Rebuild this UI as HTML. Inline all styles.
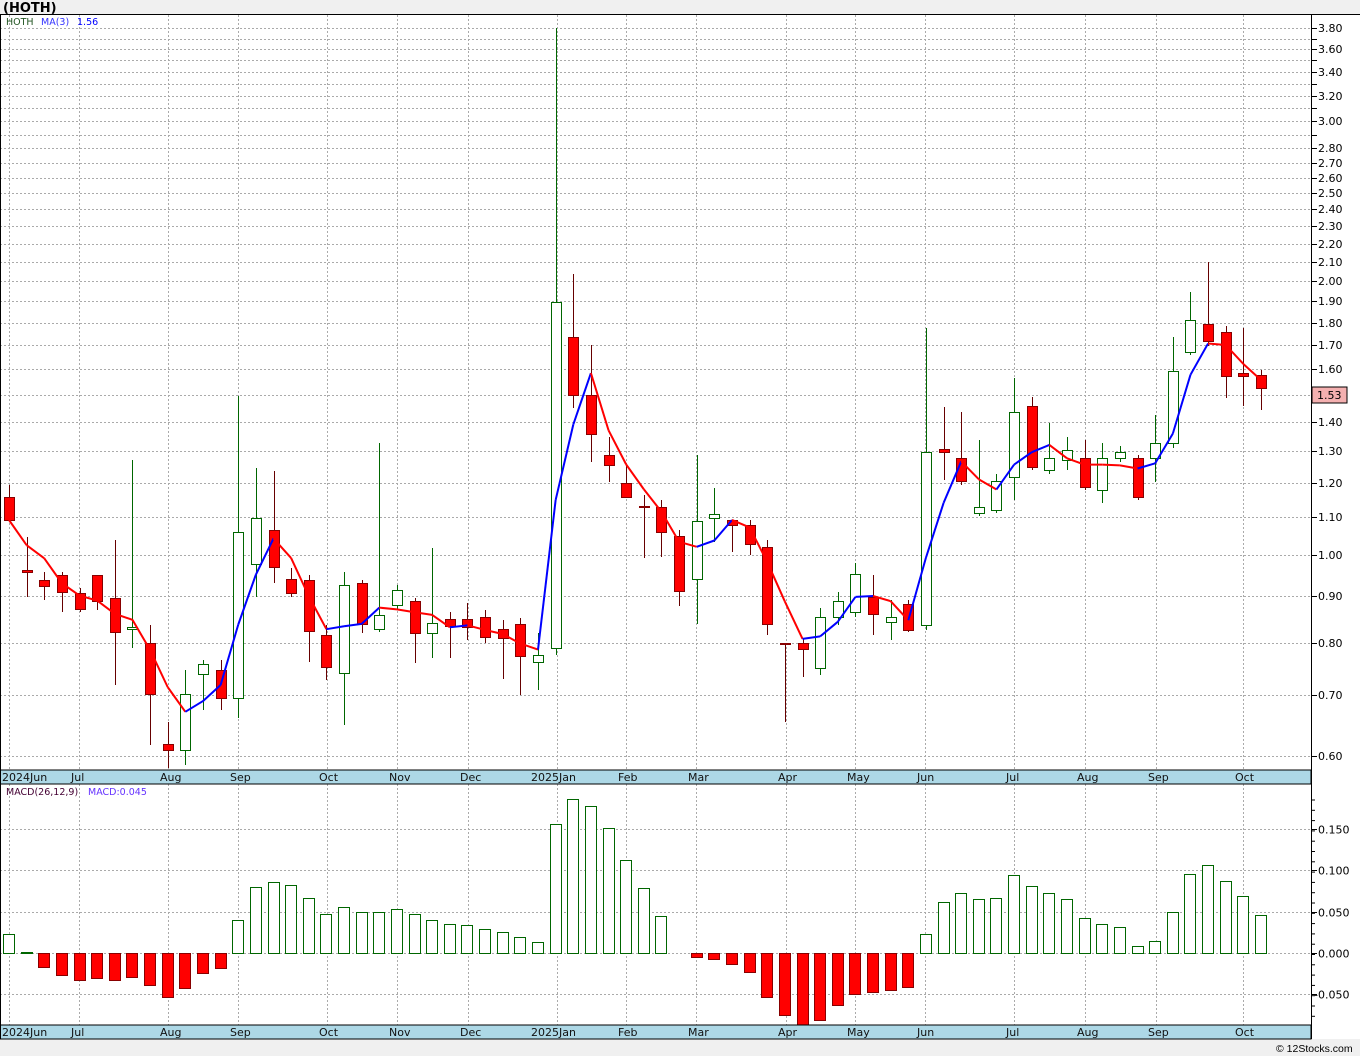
<!DOCTYPE html>
<html><head><meta charset="utf-8"><style>
html,body{margin:0;padding:0;background:#fff;}
svg{display:block;font-family:"DejaVu Sans","Liberation Sans",sans-serif;}
</style></head><body>
<svg id="s" width="1360" height="1056" xmlns="http://www.w3.org/2000/svg">
<rect x="0" y="1039" width="1360" height="17" fill="#f0f0f0"/>
<rect x="0" y="0" width="1360" height="14" fill="#f0f0f0"/>
<g id="grid"></g>
<g id="cand"></g>
<g id="macd"></g>
<rect x="0" y="770" width="1311" height="14" fill="#add8e6" stroke="#000" stroke-width="1"/>
<rect x="0" y="1025" width="1311" height="14" fill="#add8e6" stroke="#000" stroke-width="1"/>
<line x1="0" y1="14.5" x2="1360" y2="14.5" stroke="#000"/>
<line x1="1311.5" y1="14" x2="1311.5" y2="1039" stroke="#000"/>
<line x1="0.5" y1="14" x2="0.5" y2="1039" stroke="#000"/>
<g font-size="11" fill="#000">
<text x="3" y="12" font-weight="bold" font-size="13">(HOTH)</text>
<text x="6" y="25" font-size="9.5" fill="#225522">HOTH</text>
<text x="41" y="25" font-size="9.5" fill="#3333ff">MA(3)</text>
<text x="77" y="25" font-size="9.5" fill="#0000ff">1.56</text>
<text x="6" y="795" font-size="9.5" fill="#440033">MACD(26,12,9)</text>
<text x="88" y="795" font-size="9.5" fill="#6633ff">MACD:0.045</text>
</g>
<g id="dates" font-size="11" fill="#111"></g>
<g id="axis" font-size="11" fill="#000"></g>
<rect x="1312" y="387" width="35" height="16" fill="#f4b0b0" stroke="#000"/>
<text x="1317" y="399" font-size="11">1.53</text>
<text x="1276" y="1052" font-size="10.5" font-family="Liberation Sans, sans-serif">© 12Stocks.com</text>
</svg>
<script>
var NS="http://www.w3.org/2000/svg";
function el(p,t,a){var e=document.createElementNS(NS,t);for(var k in a)e.setAttribute(k,a[k]);p.appendChild(e);return e;}
var g=document.getElementById('grid'),c=document.getElementById('cand'),m=document.getElementById('macd'),ax=document.getElementById('axis'),dt=document.getElementById('dates');
function py(p){return 28+(Math.log(3.8)-Math.log(p))*394.4;}
var mx=[9,79,168,238,327,397,468,557,626,696,786,855,925,1014,1085,1156,1243];
var ml=["2024Jun","Jul","Aug","Sep","Oct","Nov","Dec","2025Jan","Feb","Mar","Apr","May","Jun","Jul","Aug","Sep","Oct"];
mx.forEach(function(x,i){
el(g,'line',{x1:x+.5,y1:15,x2:x+.5,y2:770,stroke:'#aaa','stroke-dasharray':'2,2'});
el(g,'line',{x1:x+.5,y1:784,x2:x+.5,y2:1025,stroke:'#aaa','stroke-dasharray':'2,2'});
[781,1036].forEach(function(y){var t=el(dt,'text',{x:i==0?2:(i==7?531:x-8),y:y});t.textContent=ml[i];});
});
for(var v=0.6;v<=3.81;v+=0.1){var y=Math.round(py(v))+.5;
el(g,'line',{x1:0,y1:y,x2:1311,y2:y,stroke:'#aaa','stroke-dasharray':'2,2'});
el(g,'line',{x1:1311,y1:y,x2:1317,y2:y,stroke:'#000'});}
var labs=[3.8,3.6,3.4,3.2,3.0,2.8,2.7,2.6,2.5,2.4,2.3,2.2,2.1,2.0,1.9,1.8,1.7,1.6,1.4,1.3,1.2,1.1,1.0,0.9,0.8,0.7,0.6];
labs.forEach(function(v){var t=el(ax,'text',{x:1318,y:Math.round(py(v))+4});t.textContent=v.toFixed(2);});
[[0.15,"0.150"],[0.1,"0.100"],[0.05,"0.050"],[0,"0.000"],[-0.05,"-0.050"]].forEach(function(a){
var y=Math.round(953-a[0]*827)+.5;
el(g,'line',{x1:0,y1:y,x2:1311,y2:y,stroke:'#aaa','stroke-dasharray':'2,2'});
el(g,'line',{x1:1311,y1:y,x2:1317,y2:y,stroke:'#000'});
var t=el(ax,'text',{x:a[0]<0?1314:1318,y:y+4});t.textContent=a[1];});
for(var y=800;y<1025;y+=10.3){el(g,'line',{x1:1311,y1:y,x2:1315,y2:y,stroke:'#000'});}
var C=[[497,520,485,520,0],[570,572,537,597,0],[580,586,572,600,0],[575,592,572,612,0],[593,609,588,612,0],[575,601,575,610,0],[598,632,540,685,0],[627,629,460,648,1],[643,694,625,745,0],[744,750,722,768,0],[694,750,670,765,1],[664,674,660,710,1],[670,698,660,710,0],[532,698,396,718,1],[518,564,468,597,1],[530,567,471,583,0],[579,593,568,597,0],[580,631,575,662,0],[635,667,625,680,0],[585,673,572,725,1],[583,624,580,633,0],[615,629,443,632,1],[590,605,585,610,1],[601,633,598,663,0],[623,633,548,658,1],[619,626,612,658,0],[619,627,603,640,0],[617,637,610,643,0],[629,638,620,679,0],[624,656,618,695,0],[655,662,633,690,1],[302,648,28,655,1],[337,395,274,408,0],[395,434,345,462,0],[455,465,437,482,0],[483,497,466,498,0],[506,507,495,558,0],[507,532,500,557,0],[536,591,530,606,0],[521,579,455,624,1],[514,518,488,542,1],[520,525,520,552,0],[525,544,520,555,0],[547,624,540,635,0],[643,644,643,722,0],[643,649,638,677,0],[617,668,608,675,1],[601,617,592,625,1],[574,612,563,617,1],[597,614,575,635,0],[617,622,600,640,1],[604,630,600,632,0],[452,625,328,630,1],[449,452,407,480,0],[458,481,412,485,0],[507,513,440,516,1],[481,510,474,513,1],[412,477,378,500,1],[406,467,397,470,0],[458,470,423,474,1],[450,460,437,470,1],[458,487,440,490,0],[458,490,443,503,1],[452,458,446,462,1],[458,497,455,500,0],[443,458,415,482,1],[371,443,337,448,1],[320,352,292,355,1],[324,341,262,346,0],[332,376,326,398,0],[373,376,328,406,0],[375,388,370,410,0]];
var sp=(1261-9)/71,closes=[];
C.forEach(function(k,i){var x=Math.round(9+i*sp);
el(c,'line',{x1:x+.5,y1:k[2],x2:x+.5,y2:k[3],stroke:k[4]?'#006600':'#660000'});
el(c,'rect',{x:x-4.5,y:k[0]+.5,width:10,height:Math.max(1,k[1]-k[0]),fill:k[4]?'#fff':'#f00',stroke:k[4]?'#006600':'#880000'});
closes.push(k[4]?k[0]:k[1]);});
var P=closes.map(function(y){return Math.exp(Math.log(3.8)-(y-28)/394.4);}),ma=[];
for(var i=0;i<P.length;i++){var s=0,n=0;for(var j=Math.max(0,i-2);j<=i;j++){s+=P[j];n++;}ma.push(py(s/n));}
for(var i=1;i<ma.length;i++){var x0=9+(i-1)*sp,x1=9+i*sp;
el(c,'line',{x1:x0,y1:ma[i-1],x2:x1,y2:ma[i],stroke:ma[i]<ma[i-1]?'#0000ff':'#ff0000','stroke-width':2});}
var M=[934,952,967,975,980,978,980,977,985,997,988,973,968,920,887,882,885,898,914,907,912,912,909,914,920,924,925,929,932,937,942,824,799,806,828,860,888,916,953,957,959,964,972,997,1015,1025,1020,1005,994,992,990,987,934,902,893,899,898,875,886,893,899,918,924,927,946,941,912,874,865,881,896,915];
M.forEach(function(y,i){var x=Math.round(9+i*sp);
if(y<=953){el(m,'rect',{x:x-5.5,y:y+.5,width:11,height:Math.max(0,953-y),fill:'#fff',stroke:'#006600'});}
else{el(m,'rect',{x:x-5.5,y:953.5,width:11,height:y-953,fill:'#f00',stroke:'#880000'});}});
</script>
</body></html>
